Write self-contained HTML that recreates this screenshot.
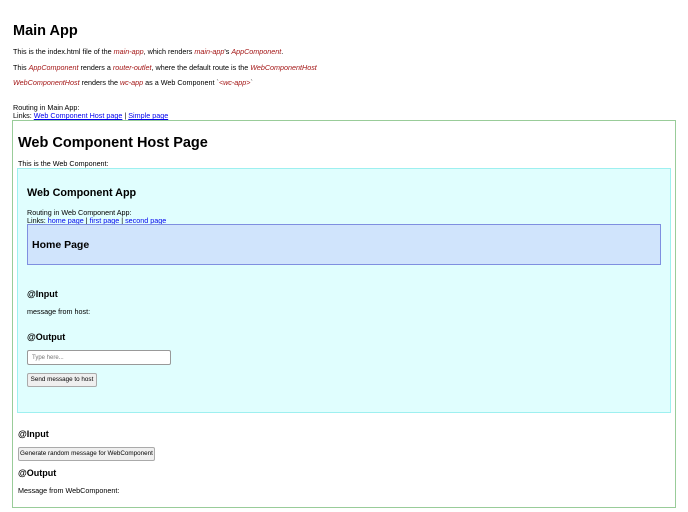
<!DOCTYPE html>
<html><head><meta charset="utf-8"><style>
*{margin:0;padding:0;box-sizing:border-box}
body{width:688px;height:512px;background:#fff;font-family:"Liberation Sans",Arial,sans-serif;color:#000;position:relative;overflow:hidden}
.a{position:absolute;white-space:nowrap;line-height:1}
.p{font-size:7.2px}
i{color:#a31515}
a{color:#00e;text-decoration:underline}
.h1{font-size:14.5px;font-weight:bold}
.h3{font-size:9px;font-weight:bold}
.btn{position:absolute;background:#efefef;border:1px solid #aaa;border-radius:2px;font-size:6.3px;line-height:12px;text-align:center;white-space:nowrap}
</style></head><body>
<div class="a h1" style="left:13px;top:24px">Main App</div>
<div class="a p" style="left:13px;top:48px">This is the index.html file of the <i>main-app</i>, which renders <i>main-app</i>'s <i>AppComponent</i>.</div>
<div class="a p" style="left:13px;top:64px">This <i>AppComponent</i> renders a <i>router-outlet</i>, where the default route is the <i>WebComponentHost</i></div>
<div class="a p" style="left:13px;top:79px"><i>WebComponentHost</i> renders the <i>wc-app</i> as a Web Component `<i>&lt;wc-app&gt;</i>`</div>
<div class="a p" style="left:13px;top:104px">Routing in Main App:</div>
<div class="a p" style="left:13px;top:112px">Links: <a>Web Component Host page</a> | <a>Simple page</a></div>

<div style="position:absolute;left:12px;top:120px;width:664px;height:388px;border:1px solid #9c9"></div>
<div class="a h1" style="left:18px;top:136px">Web Component Host Page</div>
<div class="a p" style="left:18px;top:160px">This is the Web Component:</div>

<div style="position:absolute;left:17px;top:168px;width:654px;height:245px;background:#e0fefe;border:1px solid #9ef0f0"></div>
<div class="a" style="left:27px;top:188px;font-size:10.8px;font-weight:bold">Web Component App</div>
<div class="a p" style="left:27px;top:209px">Routing in Web Component App:</div>
<div class="a p" style="left:27px;top:217px">Links: <a>home page</a> | <a>first page</a> | <a>second page</a></div>
<div style="position:absolute;left:27px;top:224px;width:634px;height:41px;background:#d0e4fc;border:1px solid #7f8fe0"></div>
<div class="a" style="left:32px;top:240px;font-size:10.5px;font-weight:bold">Home Page</div>
<div class="a h3" style="left:27px;top:290px">@Input</div>
<div class="a p" style="left:27px;top:308px">message from host:</div>
<div class="a h3" style="left:27px;top:333px">@Output</div>
<div style="position:absolute;left:27px;top:350px;width:144px;height:15px;background:#fff;border:1px solid #999;border-radius:2px"></div>
<div class="a" style="left:32px;top:355px;font-size:6px;color:#777">Type here...</div>
<div class="btn" style="left:27px;top:373px;width:70px;height:14px">Send message to host</div>

<div class="a h3" style="left:18px;top:430px">@Input</div>
<div class="btn" style="left:18px;top:447px;width:137px;height:14px">Generate random message for WebComponent</div>
<div class="a h3" style="left:18px;top:469px">@Output</div>
<div class="a p" style="left:18px;top:487px">Message from WebComponent:</div>
</body></html>
